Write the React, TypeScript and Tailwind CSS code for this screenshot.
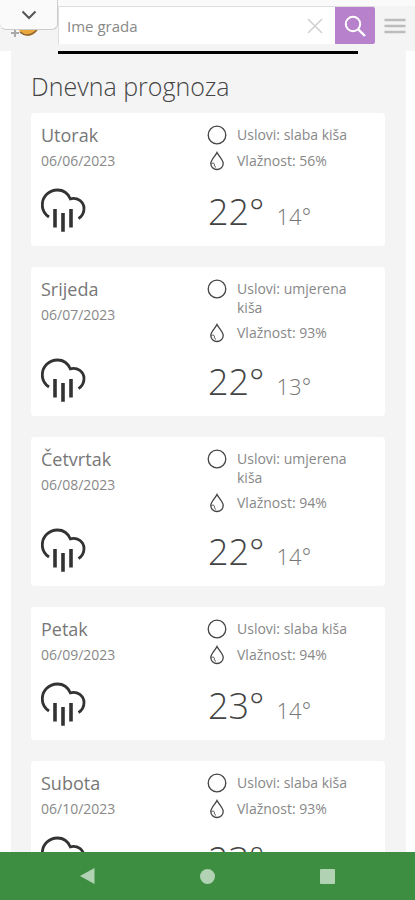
import React from "react";

type Day = {
  name: string;
  date: string;
  conditions: string;
  humidity: number;
  high: number;
  low: number;
};

const days: Day[] = [
  { name: "Utorak", date: "06/06/2023", conditions: "slaba kiša", humidity: 56, high: 22, low: 14 },
  { name: "Srijeda", date: "06/07/2023", conditions: "umjerena kiša", humidity: 93, high: 22, low: 13 },
  { name: "Četvrtak", date: "06/08/2023", conditions: "umjerena kiša", humidity: 94, high: 22, low: 14 },
  { name: "Petak", date: "06/09/2023", conditions: "slaba kiša", humidity: 94, high: 23, low: 14 },
  { name: "Subota", date: "06/10/2023", conditions: "slaba kiša", humidity: 93, high: 23, low: 14 },
];

function RainCloud() {
  return (
    <svg className="h-[46px] w-[46px]" viewBox="0 0 46 46" fill="none" stroke="#333" aria-hidden="true">
      <path
        d="M8 30C3.500 27 1.300 22.500 1.300 18C1.300 9.500 8 3 16.500 3C22.500 3 27 6.500 29.300 11.800C36.500 9.800 43 15 43 21.500C43 26 41 29.300 37.500 31.500"
        strokeWidth="2.800"
      />
      <path d="M14 22V40.500M22 26V44.800M30 22V40.500" strokeWidth="3.600" />
    </svg>
  );
}

function CircleIcon() {
  return (
    <svg className="h-5 w-5 shrink-0" viewBox="0 0 20 20" fill="none" stroke="#444" strokeWidth="1.300" aria-hidden="true">
      <circle cx="10" cy="10" r="8.800" />
    </svg>
  );
}

function DropIcon() {
  return (
    <svg className="h-5 w-5 shrink-0" viewBox="0 0 20 20" fill="none" stroke="#444" strokeWidth="1.300" aria-hidden="true">
      <path d="M10 1.500C8.500 5 3.800 8.500 3.800 12.500A6.200 6 0 0 0 16.200 12.500C16.200 8.500 11.500 5 10 1.500Z" />
      <path d="M4.200 13C5.500 11.300 7.800 12.300 7.400 14C7.200 15 8 16 9 16.200" strokeWidth="1" />
    </svg>
  );
}

function DayCard({ day }: { day: Day }) {
  return (
    <article className="rounded bg-white px-2.5 pt-3 pb-[11px]">
      <div className="flex min-h-[60px] pb-3">
        <div className="w-[166px] shrink-0">
          <h2 className="text-lg leading-5 font-normal text-[#777]">{day.name}</h2>
          <p className="mt-1.5 h-5 text-sm leading-5 font-normal text-[#888]">{day.date}</p>
        </div>
        <ul className="flex w-[150px] flex-col gap-1.5 text-sm leading-[19px] font-normal text-[#888]">
          <li className="flex gap-2.5">
            <CircleIcon />
            <span>Uslovi: {day.conditions}</span>
          </li>
          <li className="flex gap-2.5">
            <DropIcon />
            <span>Vlažnost: {day.humidity}%</span>
          </li>
        </ul>
      </div>
      <div className="flex h-[50px] items-center">
        <div className="w-[167px] shrink-0">
          <RainCloud />
        </div>
        <p className="flex items-baseline gap-3 pt-1">
          <span className="text-4xl leading-[50px] text-[#444]">{day.high}°</span>
          <span className="text-[22px] text-[#777]">{day.low}°</span>
        </p>
      </div>
    </article>
  );
}

function Header() {
  return (
    <header className="relative flex h-[51px] shrink-0 items-start border-t-[6px] border-[#fafafa] bg-[#f4f4f4]">
      <a href="#home" aria-label="Početna" className="flex h-[38px] w-[58px] shrink-0 items-center pl-2.5">
        <svg className="h-8 w-8" viewBox="0 0 32 32" aria-hidden="true">
          <path d="M1 24H9M5 20V28" stroke="#aaa" strokeWidth="2" />
          <circle cx="18" cy="17" r="10" fill="#e9a73c" />
          <path d="M10 23Q18 30 27 21" fill="none" stroke="#8a6436" strokeWidth="1.500" />
        </svg>
      </a>
      <form className="flex h-[38px] min-w-0 flex-1 border-t border-l border-[#ddd]" onSubmit={(e) => e.preventDefault()}>
        <label htmlFor="city" className="sr-only">Ime grada</label>
        <input id="city" type="text" placeholder="Ime grada" className="h-full min-w-0 flex-1 bg-white px-2 text-[15px] font-normal text-[#888] outline-none placeholder:text-[#888]" />
        <button type="button" aria-label="Obriši" className="flex w-10 items-center justify-center bg-white">
          <svg className="h-4 w-4" viewBox="0 0 16 16" stroke="#d0d0d0" strokeWidth="1.500" aria-hidden="true">
            <path d="M1 1L15 15M15 1L1 15" />
          </svg>
        </button>
        <button type="submit" aria-label="Traži" className="flex w-10 items-center justify-center rounded-r-xs bg-[#b781cb]">
          <svg className="h-[22px] w-[22px]" viewBox="0 0 22 22" fill="none" stroke="#fff" strokeWidth="2" aria-hidden="true">
            <circle cx="9" cy="9" r="7.200" />
            <path d="M14.300 14.300L21 21" strokeWidth="2.400" />
          </svg>
        </button>
      </form>
      <button type="button" aria-label="Meni" className="flex h-10 w-10 shrink-0 items-center justify-center">
        <svg className="h-[18px] w-[22px]" viewBox="0 0 22 18" stroke="#bcbcbc" strokeWidth="2.500" aria-hidden="true">
          <path d="M0.500 3H21.500M0.500 9H21.500M0.500 15H21.500" />
        </svg>
      </button>
      <button type="button" aria-label="Prikaži traku" className="absolute -top-1.5 left-0 flex h-[30px] w-[58px] items-center justify-center rounded-b-md border-r border-b border-[#ccc] bg-[#fafafa]">
        <svg className="h-2.5 w-4" viewBox="0 0 16 10" fill="none" stroke="#555" strokeWidth="2" aria-hidden="true">
          <path d="M1.500 1.500L8 8L14.500 1.500" />
        </svg>
      </button>
    </header>
  );
}

function SystemNav() {
  return (
    <nav className="flex h-12 shrink-0 items-center justify-center gap-20 bg-[#3d8e41]">
      <button type="button" aria-label="Nazad" className="flex h-10 w-10 items-center justify-center">
        <svg className="h-4 w-4" viewBox="0 0 16 16" fill="#b1d2b3" aria-hidden="true"><path d="M0 8L14.500 0V16Z" /></svg>
      </button>
      <button type="button" aria-label="Početni ekran" className="flex h-10 w-10 items-center justify-center">
        <span className="h-[15px] w-[15px] rounded-full bg-[#b1d2b3]" />
      </button>
      <button type="button" aria-label="Nedavno" className="flex h-10 w-10 items-center justify-center">
        <span className="h-[15px] w-[15px] rounded-[1px] bg-[#b1d2b3]" />
      </button>
    </nav>
  );
}

export default function App() {
  return (
    <div className="flex h-screen flex-col overflow-hidden bg-white font-['Open_Sans','Noto_Sans',sans-serif] font-light">
      <Header />
      <main className="min-h-0 flex-1 overflow-hidden pr-[9px] pl-[11px]">
        <div className="bg-[#f4f4f4] pr-[21px] pl-5">
          <div className="mx-[27px] h-[3px] bg-black" />
          <h1 className="pt-[15px] pb-2.5 text-[25px] leading-[34px] text-[#444]">Dnevna prognoza</h1>
          <div className="flex flex-col gap-[21px]">
            {days.map((day) => (
              <DayCard key={day.date} day={day} />
            ))}
          </div>
        </div>
      </main>
      <SystemNav />
    </div>
  );
}
